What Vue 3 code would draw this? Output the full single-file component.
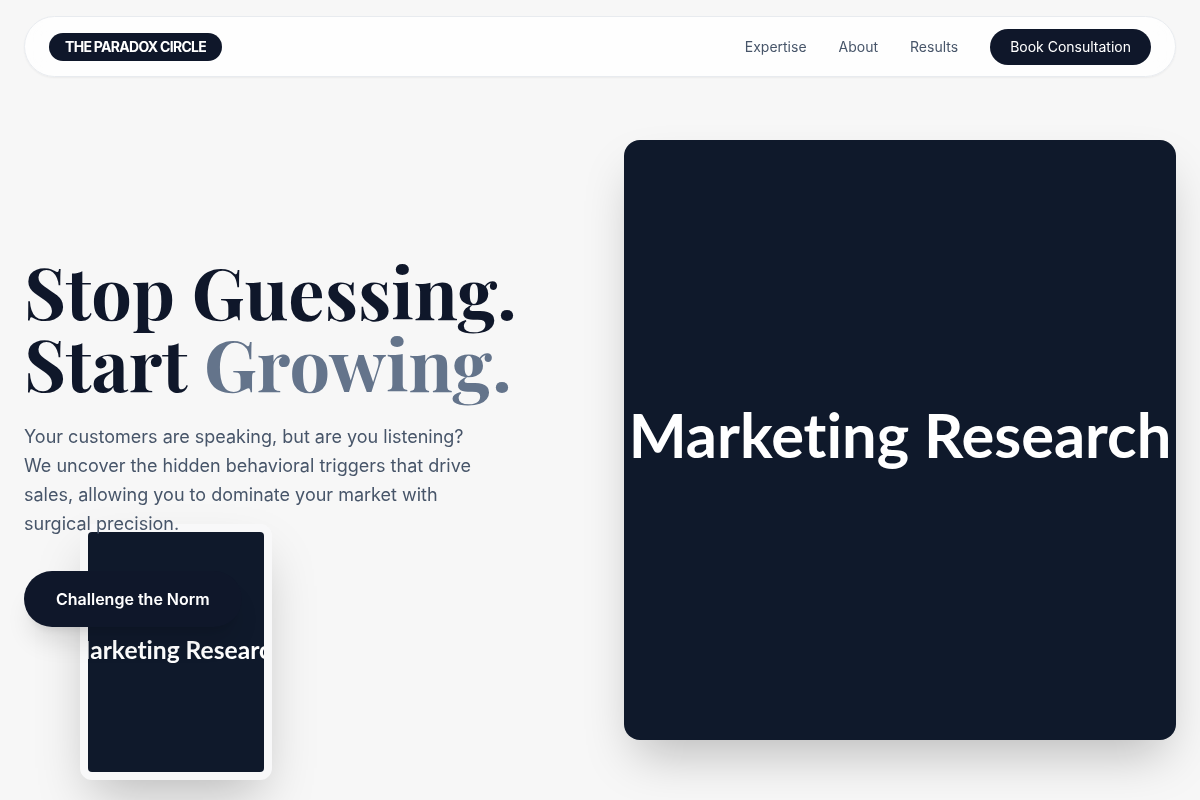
<template>
  <div class="page">
    <header class="nav">
      <div class="logo">THE PARADOX CIRCLE</div>
      <nav class="links">
        <a>Expertise</a>
        <a>About</a>
        <a>Results</a>
        <button class="book">Book Consultation</button>
      </nav>
    </header>

    <main class="hero">
      <section class="copy">
        <h1>Stop Guessing.<br />Start <span>Growing.</span></h1>
        <p>Your customers are speaking, but are you listening? We uncover the hidden behavioral triggers that drive sales, allowing you to dominate your market with surgical precision.</p>
        <button class="cta">Challenge the Norm</button>
      </section>
      <section class="visual">
        <div class="big"><span>Marketing Research</span></div>
      </section>
    </main>

    <div class="float">
      <div class="small"><span>Marketing Research</span></div>
    </div>
  </div>
</template>

<script setup>
</script>

<style>
html, body { margin: 0; background: #f7f7f7; }
</style>

<style scoped>
.page {
  position: relative;
  height: 800px;
  overflow: hidden;
  background: #f7f7f7;
  font-family: Inter, sans-serif;
  color: #0f172a;
}

.nav {
  margin: 16px 24px 0;
  height: 61px;
  box-sizing: border-box;
  padding: 0 24px;
  display: flex;
  align-items: center;
  justify-content: space-between;
  background: rgba(255, 255, 255, 0.8);
  backdrop-filter: blur(12px);
  border: 1px solid #e8ebef;
  border-radius: 31px;
  box-shadow: 0 1px 2px rgba(0, 0, 0, 0.05);
}

.logo {
  padding: 6px 16px;
  border-radius: 14px;
  background: #0f172a;
  color: #fff;
  font-size: 14px;
  font-weight: 700;
  line-height: 16px;
  letter-spacing: -0.7px;
}

.links {
  display: flex;
  align-items: center;
  gap: 32px;
  font-size: 14px;
  color: #475569;
}

.book {
  height: 36px;
  padding: 0 20px;
  border: 0;
  border-radius: 18px;
  background: #0f172a;
  color: #fff;
  font: 400 14px Inter, sans-serif;
}

.hero {
  display: flex;
  justify-content: space-between;
  padding: 63px 24px 0;
}

.copy {
  position: relative;
  z-index: 2;
  will-change: transform;
  width: 500px;
  padding-top: 114px;
}

h1 {
  margin: 0;
  font-family: "Playfair Display", "Liberation Serif", serif;
  font-size: 72px;
  line-height: 72px;
  font-weight: 700;
}

h1 span { color: #64748b; }

.copy p {
  margin: 24px 0 0;
  width: 460px;
  font-size: 18px;
  line-height: 29px;
  color: #475569;
}

.cta {
  margin-top: 33px;
  height: 56px;
  padding: 0 32px;
  border: 0;
  border-radius: 28px;
  background: #0f172a;
  color: #fff;
  font: 600 16px Inter, sans-serif;
  box-shadow: 0 20px 25px -5px rgba(0, 0, 0, 0.1), 0 8px 10px -6px rgba(0, 0, 0, 0.1);
}

.big {
  width: 552px;
  height: 600px;
  box-sizing: border-box;
  padding-bottom: 12px;
  border-radius: 16px;
  background: #0f192b;
  display: flex;
  align-items: center;
  justify-content: center;
  overflow: hidden;
  color: #fff;
  font-family: Lato, sans-serif;
  font-size: 61.4px;
  font-weight: 700;
  font-variant-ligatures: none;
  line-height: 60px;
  white-space: nowrap;
  will-change: transform;
  box-shadow: 0 25px 50px -12px rgba(0, 0, 0, 0.25);
}

.float {
  position: absolute;
  z-index: 1;
  left: 80px;
  top: 524px;
  padding: 8px;
  background: #f8f8f9;
  border-radius: 12px;
  will-change: transform;
  box-shadow: 0 25px 50px -12px rgba(0, 0, 0, 0.25);
}

.small {
  width: 176px;
  height: 240px;
  box-sizing: border-box;
  padding-bottom: 4px;
  border-radius: 4px;
  background: #0f192b;
  display: flex;
  align-items: center;
  justify-content: center;
  overflow: hidden;
  color: #fff;
  font-family: Lato, sans-serif;
  font-size: 24.6px;
  font-weight: 700;
  font-variant-ligatures: none;
  line-height: 24px;
  white-space: nowrap;
}
</style>
